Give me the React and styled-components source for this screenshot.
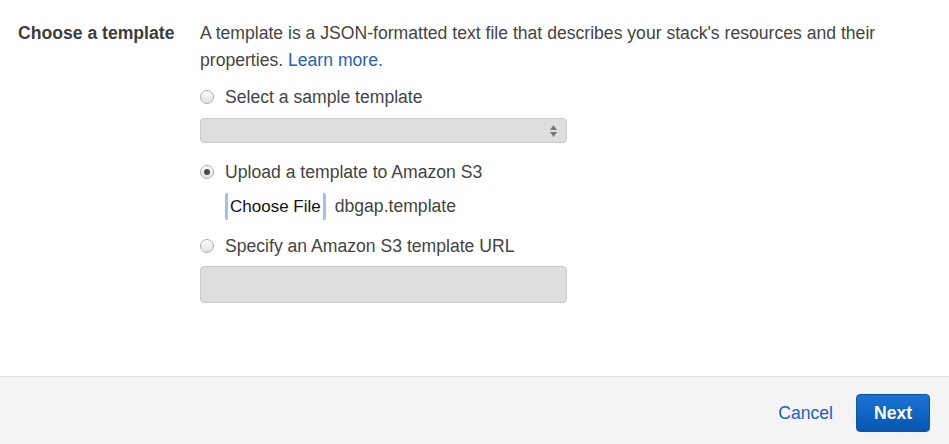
import React from 'react'
import styled, { createGlobalStyle } from 'styled-components'

const GlobalStyle = createGlobalStyle`
    html, body {
        margin: 0;
        padding: 0;
        background: #fff;
    }
    body {
        font-family: "Liberation Sans", Arial, sans-serif;
        color: #444;
        font-size: 17.6px;
    }
`

const Page = styled.div`
    display: flex;
    flex-direction: column;
    width: 949px;
    height: 444px;
`

const Main = styled.div`
    flex: 0 0 376px;
    display: flex;
    padding-top: 20px;
    box-sizing: border-box;
`

const SectionLabel = styled.div`
    width: 200px;
    box-sizing: border-box;
    padding-left: 18px;
    font-weight: bold;
    line-height: 27px;
    color: #3d3d3d;
`

const Content = styled.div`
    width: 720px;
    display: flex;
    flex-direction: column;
`

const Description = styled.p`
    margin: 0;
    line-height: 27px;
`

const Link = styled.a`
    color: #1f5fbf;
    text-decoration: none;
    cursor: pointer;
`

const RadioRow = styled.label`
    display: flex;
    align-items: center;
    gap: 11px;
    height: 22px;
    margin-top: ${p => p.top}px;
    cursor: pointer;
`

const RadioDot = styled.span`
    width: 14px;
    height: 14px;
    box-sizing: border-box;
    border-radius: 50%;
    border: 1px solid #aeaeae;
    background: linear-gradient(#fdfdfd, #e2e2e2);
    display: flex;
    align-items: center;
    justify-content: center;
    &::after {
        content: '';
        width: 6px;
        height: 6px;
        border-radius: 50%;
        background: ${p => (p.checked ? '#4a4a4a' : 'transparent')};
    }
`

const GrayBox = styled.div`
    width: 367px;
    height: ${p => p.h}px;
    margin-top: ${p => p.top}px;
    box-sizing: border-box;
    background: #dedede;
    border: 1px solid #cbcbcb;
    border-radius: 4px;
    display: flex;
    align-items: center;
    justify-content: flex-end;
    padding-right: 8px;
`

const FileRow = styled.div`
    display: flex;
    align-items: center;
    gap: 9px;
    margin-top: 10px;
    padding-left: 25px;
    height: 27px;
`

const FileButton = styled.button`
    height: 27px;
    padding: 0 2px;
    font-family: "Liberation Sans", Arial, sans-serif;
    font-size: 17px;
    color: #111;
    background: #fff;
    border: none;
    border-left: 3px solid #9cc2f0;
    border-right: 3px solid #9cc2f0;
    border-radius: 2px;
`

const FileName = styled.span`
    color: #444;
`

const Footer = styled.div`
    flex: 1;
    background: #f4f4f4;
    border-top: 1px solid #e2e2e2;
    display: flex;
    align-items: center;
    justify-content: flex-end;
    gap: 23px;
    padding-right: 19px;
    padding-top: 5px;
`

const NextButton = styled.button`
    width: 74px;
    height: 38px;
    border: 1px solid #0b54a8;
    border-radius: 4px;
    background: linear-gradient(#1a73d4, #0656b1);
    color: #fff;
    font-family: "Liberation Sans", Arial, sans-serif;
    font-weight: bold;
    font-size: 17.6px;
    cursor: pointer;
`

const Arrows = () => (
    <svg width="9" height="14" viewBox="0 0 9 14">
        <path d="M4.5 1 L8 6 L1 6 Z" fill="#777" />
        <path d="M1 8 L8 8 L4.5 13 Z" fill="#777" />
    </svg>
)

const App = () => {
    return <Page>
        <GlobalStyle />
        <Main>
            <SectionLabel>Choose a template</SectionLabel>
            <Content>
                <Description>
                    A template is a JSON-formatted text file that describes your stack's resources and their properties. <Link>Learn more.</Link>
                </Description>
                <RadioRow top={12}>
                    <RadioDot />
                    Select a sample template
                </RadioRow>
                <GrayBox h={25} top={10}><Arrows /></GrayBox>
                <RadioRow top={18}>
                    <RadioDot checked />
                    Upload a template to Amazon S3
                </RadioRow>
                <FileRow>
                    <FileButton>Choose File</FileButton>
                    <FileName>dbgap.template</FileName>
                </FileRow>
                <RadioRow top={15}>
                    <RadioDot />
                    Specify an Amazon S3 template URL
                </RadioRow>
                <GrayBox h={37} top={9} />
            </Content>
        </Main>
        <Footer>
            <Link>Cancel</Link>
            <NextButton>Next</NextButton>
        </Footer>
    </Page>
}

export default App
